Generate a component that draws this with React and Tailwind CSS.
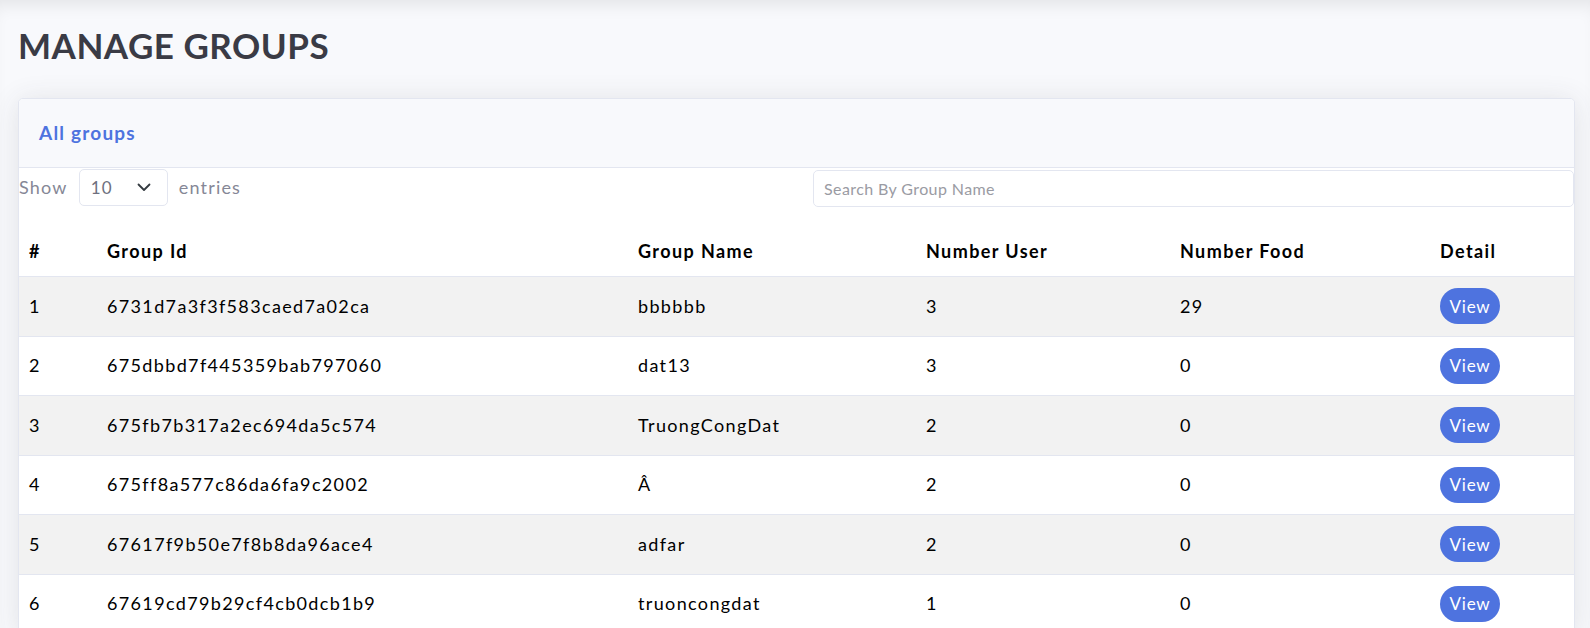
import React from "react";

const rows = [
  ["1", "6731d7a3f3f583caed7a02ca", "bbbbbb", "3", "29"],
  ["2", "675dbbd7f445359bab797060", "dat13", "3", "0"],
  ["3", "675fb7b317a2ec694da5c574", "TruongCongDat", "2", "0"],
  ["4", "675ff8a577c86da6fa9c2002", "Â", "2", "0"],
  ["5", "67617f9b50e7f8b8da96ace4", "adfar", "2", "0"],
  ["6", "67619cd79b29cf4cb0dcb1b9", "truoncongdat", "1", "0"],
];

const grid = "grid grid-cols-[78px_531px_288px_254px_260px_1fr]";

export default function App() {
  return (
    <div
      className="min-h-screen bg-[#f8f9fc] shadow-[inset_0_14px_18px_-10px_rgba(0,0,0,0.09)] pl-[18px] pr-[15px] pt-[24px] pb-[40px]"
      style={{ fontFamily: "Lato, 'Noto Sans', sans-serif" }}
    >
      <h2 className="text-[35px] leading-[42px] font-bold text-[#3a3b45] mb-[32px] tracking-[0.5px]">
        MANAGE GROUPS
      </h2>
      <div className="bg-white border border-[#e3e6f0] rounded-[5px] shadow-[0_2px_28px_0_rgba(58,59,69,0.12)] overflow-hidden">
        <div className="h-[69px] flex items-center px-[20px] bg-[#f8f9fc] border-b border-[#e3e6f0]">
          <span className="text-[19px] font-bold text-[#4e73df] tracking-[1.2px]">All groups</span>
        </div>
        <div className="flex items-center justify-between">
          <div className="flex items-center text-[18px] tracking-[1.2px] text-[#858796]">
            <span>Show</span>
            <div className="ml-[11px] h-[37px] w-[89px] border border-[#e3e6f0] rounded-[5px] flex items-center justify-between pl-[11px] pr-[16px] text-[#6e707e] text-[17px]">
              <span>10</span>
              <svg width="14" height="9" viewBox="0 0 14 9" fill="none">
                <path d="M1.5 1.5 L7 7 L12.5 1.5" stroke="#343a40" strokeWidth="1.8" strokeLinecap="round" strokeLinejoin="round" />
              </svg>
            </div>
            <span className="ml-[11px]">entries</span>
          </div>
          <div className="w-[761px] h-[37px] mt-[2px] border border-[#e3e6f0] rounded-[5px] flex items-center px-[10px] text-[16px] tracking-[0.4px] text-[#9a9ba3]">
            Search By Group Name
          </div>
        </div>
        <div className="mt-[20px]">
          <div className={`${grid} h-[50px] items-center border-b border-[#e3e6f0] text-[18px] tracking-[1.4px] font-bold text-black`}>
            <div className="px-[10px]">#</div>
            <div className="px-[10px]">Group Id</div>
            <div className="px-[10px]">Group Name</div>
            <div className="px-[10px]">Number User</div>
            <div className="px-[10px]">Number Food</div>
            <div className="px-[10px]">Detail</div>
          </div>
          {rows.map((r, i) => (
            <div
              key={r[0]}
              className={`${grid} h-[59.5px] items-center border-b border-[#e3e6f0] text-[18px] tracking-[1.35px] text-black ${i % 2 === 0 ? "bg-[#f2f2f2]" : "bg-white"}`}
            >
              <div className="px-[10px]">{r[0]}</div>
              <div className="px-[10px]">{r[1]}</div>
              <div className="px-[10px]">{r[2]}</div>
              <div className="px-[10px]">{r[3]}</div>
              <div className="px-[10px]">{r[4]}</div>
              <div className="px-[10px]">
                <button className="w-[60px] h-[36px] rounded-full bg-[#4e73df] text-white text-[17px] tracking-[0.8px] flex items-center justify-center">
                  View
                </button>
              </div>
            </div>
          ))}
        </div>
      </div>
    </div>
  );
}
